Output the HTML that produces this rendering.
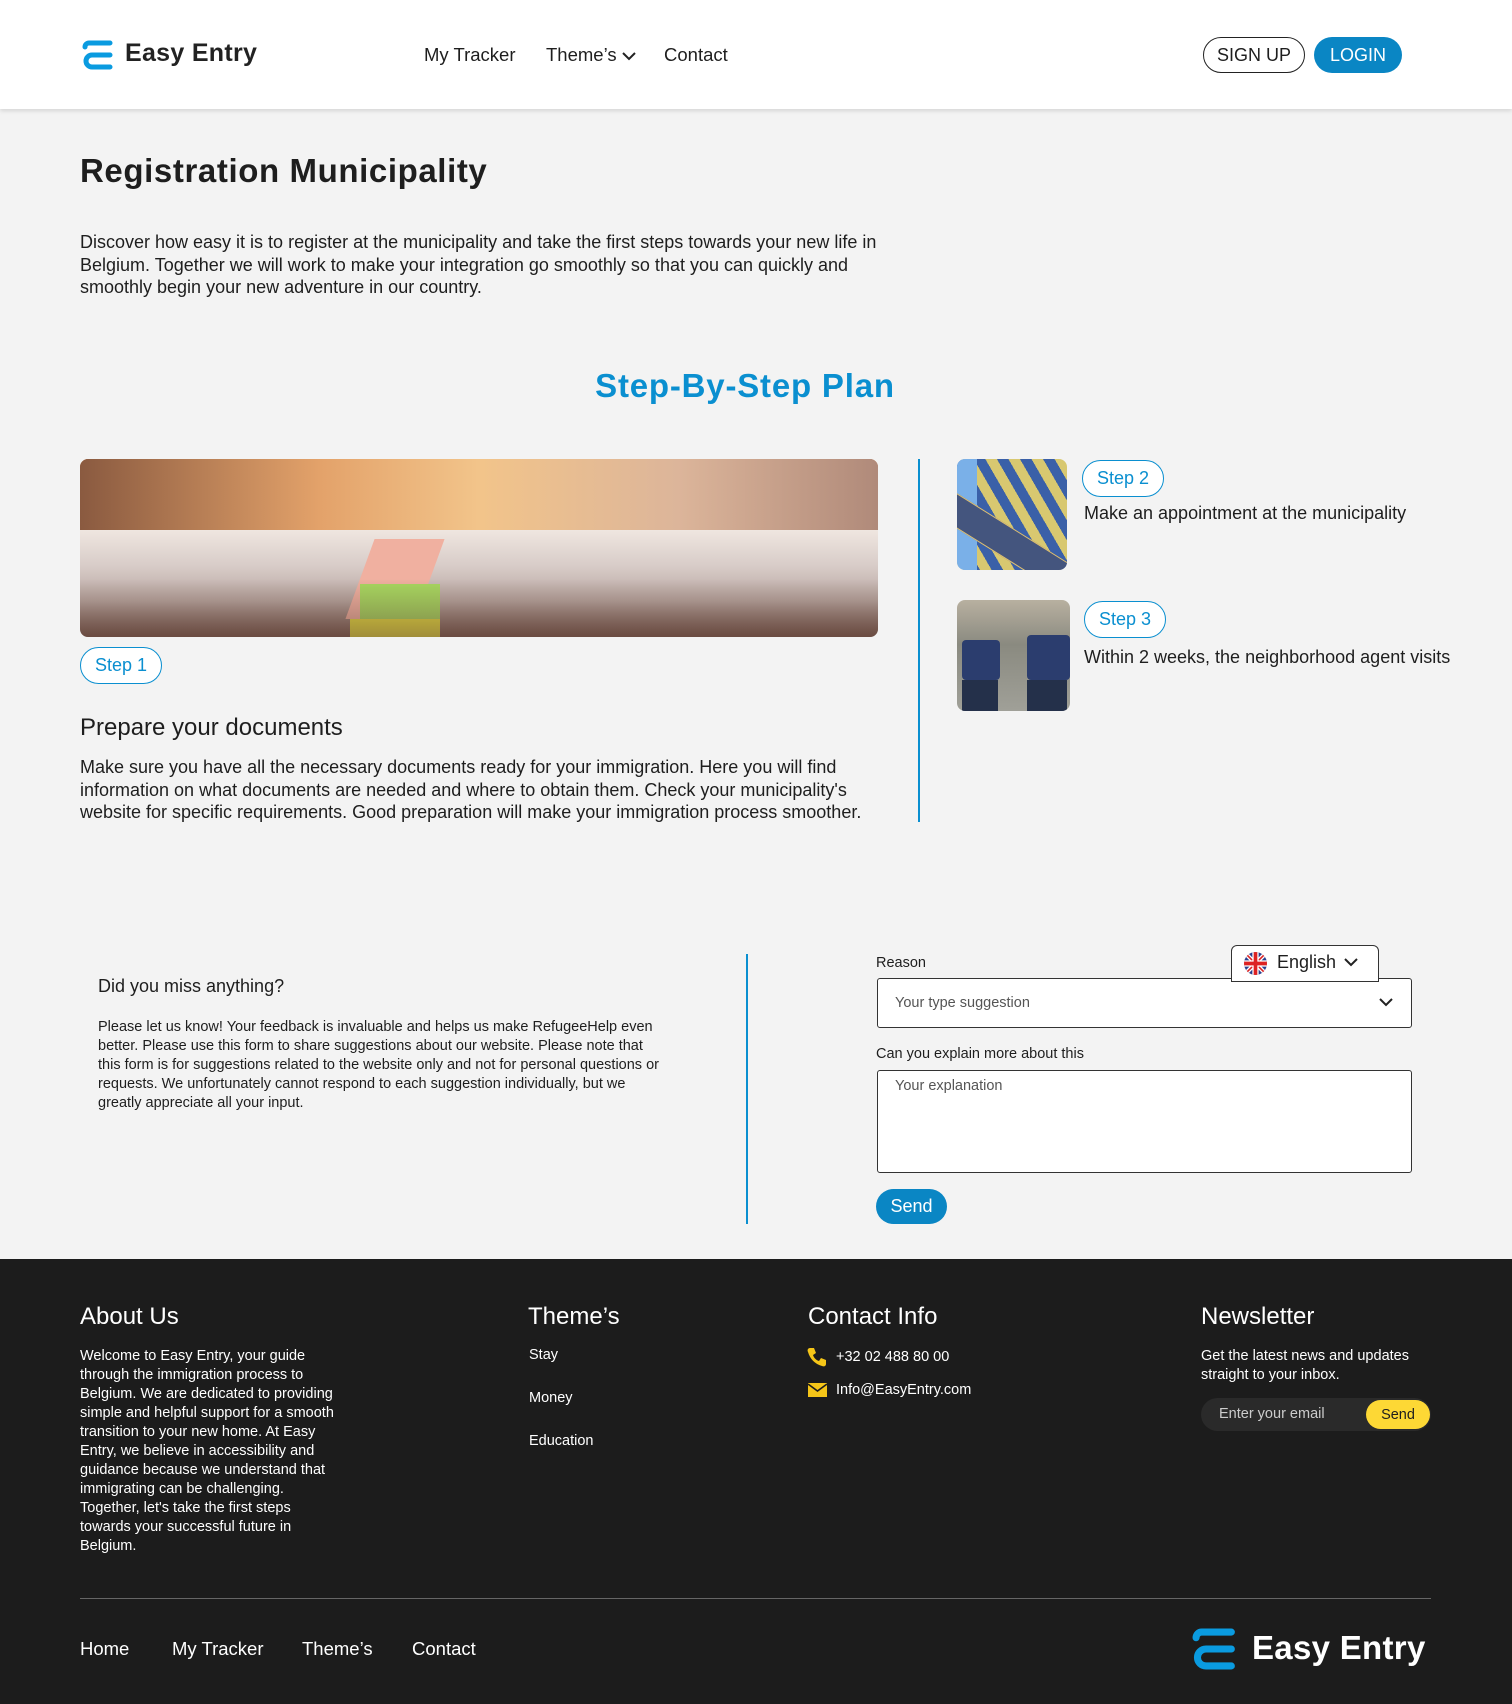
<!DOCTYPE html>
<html><head><meta charset="utf-8"><style>
*{margin:0;padding:0;box-sizing:border-box}
body{width:1512px;height:1704px;background:#f3f3f3;font-family:"Liberation Sans",sans-serif;color:#1e1e1e;position:relative;overflow:hidden}
.a{position:absolute;white-space:nowrap}
.hdr{position:absolute;left:0;top:0;width:1512px;height:109px;background:#fff;box-shadow:0 2px 4px rgba(0,0,0,.12)}
.nav{font-size:18.5px;color:#1e1e1e}
.pill{position:absolute;border:1.5px solid #0a8fd0;border-radius:20px;color:#0a8fd0;font-size:18px;display:flex;align-items:center;justify-content:center;background:#fff}
.p{font-size:18px;line-height:22.5px;white-space:normal}
.fp{font-size:14.5px;line-height:19px;white-space:normal}
.ft{color:#fff}
</style></head><body>
<div class="hdr"></div>
<svg class="a" style="left:80px;top:38px" width="34" height="34" viewBox="0 0 34 34"><path d="M30 5 H9 A4 4 0 0 0 5 9" stroke="#0a9be0" stroke-width="5" fill="none" stroke-linecap="round"/><path d="M30 17 H12 A6 6 0 0 0 12 29 H30" stroke="#0a9be0" stroke-width="5" fill="none" stroke-linecap="round"/></svg>
<div class="a" style="left:125px;top:39px;font-size:25px;font-weight:bold;color:#222;letter-spacing:.3px">Easy Entry</div>
<div class="a nav" style="left:424px;top:44px">My Tracker</div>
<div class="a nav" style="left:546px;top:44px">Theme’s <svg width="14" height="10" viewBox="0 0 14 10"><path d="M1 2 L7 8 L13 2" stroke="#222" stroke-width="2" fill="none"/></svg></div>
<div class="a nav" style="left:664px;top:44px">Contact</div>
<div class="a" style="left:1203px;top:37px;width:102px;height:36px;border:1.5px solid #222;border-radius:18px;font-size:18px;display:flex;align-items:center;justify-content:center">SIGN UP</div>
<div class="a" style="left:1314px;top:37px;width:88px;height:36px;background:#0a86c4;border-radius:18px;font-size:18px;color:#fff;display:flex;align-items:center;justify-content:center">LOGIN</div>

<div class="a" style="left:80px;top:152px;font-size:33px;font-weight:600;letter-spacing:.6px">Registration Municipality</div>
<div class="a p" style="left:80px;top:231px;width:820px">Discover how easy it is to register at the municipality and take the first steps towards your new life in Belgium. Together we will work to make your integration go smoothly so that you can quickly and smoothly begin your new adventure in our country.</div>
<div class="a" style="left:0;width:1490px;text-align:center;top:367px;font-size:33px;font-weight:bold;color:#0a8fd0;letter-spacing:.8px">Step-By-Step Plan</div>

<div class="a" style="left:80px;top:459px;width:798px;height:178px;border-radius:8px;overflow:hidden;background:linear-gradient(180deg,#c87a3c 0%,#e6b07a 22%,#efe6e0 40%,#d8ccc8 60%,#b8a6a0 80%,#7a5a50 100%)">
<div style="position:absolute;left:0;top:0;width:100%;height:40%;background:linear-gradient(90deg,#8a5a40,#e3a26a 30%,#f2c48a 50%,#dcb59a 75%,#b08a7a)"></div>
<div style="position:absolute;left:280px;top:80px;width:70px;height:80px;background:#f0b0a0;transform:skewX(-20deg)"></div>
<div style="position:absolute;left:280px;top:125px;width:80px;height:35px;background:#a8d860"></div>
<div style="position:absolute;left:270px;top:160px;width:90px;height:18px;background:#e8e040"></div>
<div style="position:absolute;left:0;top:120px;width:100%;height:58px;background:linear-gradient(180deg,transparent,rgba(90,60,50,.5))"></div>
</div>
<div class="pill" style="left:80px;top:647px;width:82px;height:37px">Step 1</div>
<div class="a" style="left:80px;top:714px;font-size:24px">Prepare your documents</div>
<div class="a p" style="left:80px;top:756px;width:810px">Make sure you have all the necessary documents ready for your immigration. Here you will find information on what documents are needed and where to obtain them. Check your municipality's website for specific requirements. Good preparation will make your immigration process smoother.</div>
<div class="a" style="left:918px;top:459px;width:1.5px;height:363px;background:#0a8fd0"></div>

<div class="a" style="left:957px;top:459px;width:110px;height:111px;border-radius:8px;overflow:hidden;background:repeating-linear-gradient(60deg,#d8c870 0 10px,#3a60a8 10px 20px)">
<div style="position:absolute;left:-5px;top:0;width:25px;height:111px;background:#7ab0e8"></div>
<div style="position:absolute;left:-10px;top:28px;width:150px;height:30px;background:#44557e;border:1.5px solid #e0c070;transform:rotate(32deg);transform-origin:left top"></div>
</div>
<div class="pill" style="left:1082px;top:460px;width:82px;height:37px">Step 2</div>
<div class="a" style="left:1084px;top:503px;font-size:18px">Make an appointment at the municipality</div>

<div class="a" style="left:957px;top:600px;width:113px;height:111px;border-radius:8px;overflow:hidden;background:linear-gradient(180deg,#b8b0a0,#8a8a80 40%,#a0a098)">
<div style="position:absolute;left:5px;top:40px;width:38px;height:40px;background:#2b3d6e;border-radius:4px"></div>
<div style="position:absolute;left:5px;top:80px;width:36px;height:31px;background:#24304a"></div>
<div style="position:absolute;left:70px;top:35px;width:43px;height:45px;background:#2b3d6e;border-radius:4px"></div>
<div style="position:absolute;left:70px;top:80px;width:40px;height:31px;background:#24304a"></div>
</div>
<div class="pill" style="left:1084px;top:601px;width:82px;height:37px">Step 3</div>
<div class="a" style="left:1084px;top:647px;font-size:18px">Within 2 weeks, the neighborhood agent visits</div>

<div class="a" style="left:98px;top:976px;font-size:18px">Did you miss anything?</div>
<div class="a fp" style="left:98px;top:1018px;width:565px">Please let us know! Your feedback is invaluable and helps us make RefugeeHelp even better. Please use this form to share suggestions about our website. Please note that this form is for suggestions related to the website only and not for personal questions or requests. We unfortunately cannot respond to each suggestion individually, but we greatly appreciate all your input.</div>
<div class="a" style="left:746px;top:954px;width:1.5px;height:270px;background:#0a8fd0"></div>
<div class="a" style="left:876px;top:955px;font-size:14.5px">Reason</div>
<div class="a" style="left:877px;top:978px;width:535px;height:50px;border:1.5px solid #333;border-radius:3px;background:#fff"></div>
<div class="a" style="left:895px;top:995px;font-size:14.5px;color:#555">Your type suggestion</div>
<svg class="a" style="left:1378px;top:997px" width="16" height="10" viewBox="0 0 16 10"><path d="M2 2 L8 8 L14 2" stroke="#222" stroke-width="2" fill="none"/></svg>
<div class="a" style="left:1231px;top:945px;width:148px;height:37px;border:1.5px solid #333;border-radius:6px 6px 0 0;background:#fff"></div>
<svg class="a" style="left:1244px;top:952px" width="23" height="23" viewBox="0 0 22 22"><clipPath id="c"><circle cx="11" cy="11" r="11"/></clipPath><g clip-path="url(#c)"><rect width="22" height="22" fill="#2a3f8e"/><path d="M0 0L22 22M22 0L0 22" stroke="#fff" stroke-width="4"/><path d="M0 0L22 22M22 0L0 22" stroke="#d22" stroke-width="1.5"/><path d="M11 0V22M0 11H22" stroke="#fff" stroke-width="6"/><path d="M11 0V22M0 11H22" stroke="#d22" stroke-width="3.5"/></g></svg>
<div class="a" style="left:1277px;top:952px;font-size:18px">English</div>
<svg class="a" style="left:1344px;top:958px" width="14" height="9" viewBox="0 0 14 9"><path d="M1 1 L7 7 L13 1" stroke="#222" stroke-width="2" fill="none"/></svg>
<div class="a" style="left:876px;top:1046px;font-size:14.5px">Can you explain more about this</div>
<div class="a" style="left:877px;top:1070px;width:535px;height:103px;border:1.5px solid #333;border-radius:3px;background:#fff"></div>
<div class="a" style="left:895px;top:1078px;font-size:14.5px;color:#555">Your explanation</div>
<div class="a" style="left:876px;top:1189px;width:71px;height:35px;background:#0a86c4;border-radius:18px;color:#fff;font-size:18px;display:flex;align-items:center;justify-content:center">Send</div>

<div class="a" style="left:0;top:1259px;width:1512px;height:445px;background:#1c1c1c"></div>
<div class="a ft" style="left:80px;top:1303px;font-size:24px">About Us</div>
<div class="a ft fp" style="left:80px;top:1347px;width:256px">Welcome to Easy Entry, your guide through the immigration process to Belgium. We are dedicated to providing simple and helpful support for a smooth transition to your new home. At Easy Entry, we believe in accessibility and guidance because we understand that immigrating can be challenging. Together, let's take the first steps towards your successful future in Belgium.</div>
<div class="a ft" style="left:528px;top:1303px;font-size:24px">Theme’s</div>
<div class="a ft" style="left:529px;top:1347px;font-size:14.5px">Stay</div>
<div class="a ft" style="left:529px;top:1390px;font-size:14.5px">Money</div>
<div class="a ft" style="left:529px;top:1433px;font-size:14.5px">Education</div>
<div class="a ft" style="left:808px;top:1303px;font-size:24px">Contact Info</div>
<svg class="a" style="left:806px;top:1346px" width="22" height="22" viewBox="0 0 22 22"><path d="M4 2 L8 2 L10 7 L7 9 C8 12 10 14 13 15 L15 12 L20 14 L20 18 C20 20 18 21 16 20 C9 18 4 13 2 6 C1 4 2 2 4 2Z" fill="#f5c518"/></svg>
<div class="a ft" style="left:836px;top:1349px;font-size:14.5px">+32 02 488 80 00</div>
<svg class="a" style="left:808px;top:1383px" width="19" height="14" viewBox="0 0 19 14"><rect width="19" height="14" fill="#f5c518"/><path d="M0 1 L9.5 8 L19 1" stroke="#1c1c1c" stroke-width="1.6" fill="none"/></svg>
<div class="a ft" style="left:836px;top:1382px;font-size:14.5px">Info@EasyEntry.com</div>
<div class="a ft" style="left:1201px;top:1303px;font-size:24px">Newsletter</div>
<div class="a ft fp" style="left:1201px;top:1347px;width:240px">Get the latest news and updates straight to your inbox.</div>
<div class="a" style="left:1201px;top:1398px;width:230px;height:33px;background:#2a2a2a;border-radius:17px"></div>
<div class="a" style="left:1219px;top:1406px;font-size:14.5px;color:#ccc">Enter your email</div>
<div class="a" style="left:1366px;top:1400px;width:64px;height:29px;background:#fdd835;border-radius:15px;font-size:14.5px;display:flex;align-items:center;justify-content:center">Send</div>
<div class="a" style="left:80px;top:1598px;width:1351px;height:1px;background:#666"></div>
<div class="a ft" style="left:80px;top:1638px;font-size:18.5px">Home</div>
<div class="a ft" style="left:172px;top:1638px;font-size:18.5px">My Tracker</div>
<div class="a ft" style="left:302px;top:1638px;font-size:18.5px">Theme’s</div>
<div class="a ft" style="left:412px;top:1638px;font-size:18.5px">Contact</div>
<svg class="a" style="left:1189px;top:1625px" width="48" height="48" viewBox="0 0 34 34"><path d="M30 5 H9 A4 4 0 0 0 5 9" stroke="#0a9be0" stroke-width="5" fill="none" stroke-linecap="round"/><path d="M30 17 H12 A6 6 0 0 0 12 29 H30" stroke="#0a9be0" stroke-width="5" fill="none" stroke-linecap="round"/></svg>
<div class="a ft" style="left:1252px;top:1629px;font-size:33px;font-weight:bold;letter-spacing:.3px">Easy Entry</div>
</body></html>
